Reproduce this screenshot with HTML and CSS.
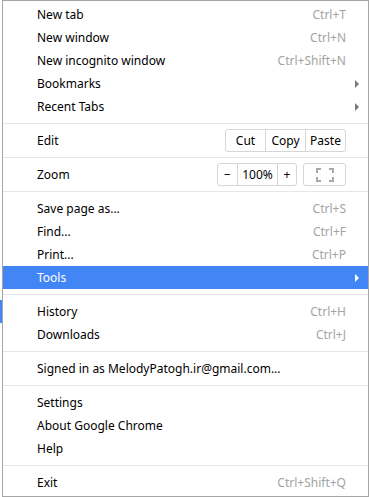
FILE: index.html
```html
<!DOCTYPE html>
<html lang="en">
<head>
    <meta charset="UTF-8">
    <meta name="viewport" content="width=device-width, initial-scale=1.0">
    <title>Chrome Menu</title>
    <link rel="stylesheet" href="styles.css">
</head>
<body>
    <div class="page">
        <div class="behind"></div>
        <div class="menu">
            <div class="item"><span class="label">New tab</span><span class="key">Ctrl+T</span></div>
            <div class="item"><span class="label">New window</span><span class="key">Ctrl+N</span></div>
            <div class="item"><span class="label">New incognito window</span><span class="key">Ctrl+Shift+N</span></div>
            <div class="item"><span class="label">Bookmarks</span><span class="arrow"></span></div>
            <div class="item"><span class="label">Recent Tabs</span><span class="arrow"></span></div>

            <div class="sep"></div>

            <div class="item">
                <span class="label">Edit</span>
                <div class="btn-group edit-group">
                    <span class="seg cut">Cut</span>
                    <span class="seg copy">Copy</span>
                    <span class="seg paste">Paste</span>
                </div>
            </div>

            <div class="sep"></div>

            <div class="item">
                <span class="label">Zoom</span>
                <div class="btn-group zoom-group">
                    <span class="seg minus">&minus;</span>
                    <span class="seg level">100%</span>
                    <span class="seg plus">+</span>
                </div>
                <div class="btn-group full">
                    <svg width="18" height="14" viewBox="0 0 18 14">
                        <!-- four corner marks -->
                        <path d="M1 5V1H5 M13 1H17V5 M17 9V13H13 M5 13H1V9" fill="none" stroke="#a8a8a8" stroke-width="2"/>
                    </svg>
                </div>
            </div>

            <div class="sep"></div>

            <div class="item"><span class="label">Save page as...</span><span class="key">Ctrl+S</span></div>
            <div class="item"><span class="label">Find...</span><span class="key">Ctrl+F</span></div>
            <div class="item"><span class="label">Print...</span><span class="key">Ctrl+P</span></div>
            <div class="item active"><span class="label">Tools</span><span class="arrow"></span></div>

            <div class="sep"></div>

            <div class="item"><span class="label">History</span><span class="key">Ctrl+H</span></div>
            <div class="item"><span class="label">Downloads</span><span class="key">Ctrl+J</span></div>

            <div class="sep"></div>

            <div class="item"><span class="label">Signed in as MelodyPatogh.ir@gmail.com...</span></div>

            <div class="sep"></div>

            <div class="item"><span class="label">Settings</span></div>
            <div class="item"><span class="label">About Google Chrome</span></div>
            <div class="item"><span class="label">Help</span></div>

            <div class="sep"></div>

            <div class="item"><span class="label">Exit</span><span class="key">Ctrl+Shift+Q</span></div>
        </div>
    </div>
</body>
</html>
```

FILE: styles.css
```css
body {
    margin: 0;
    padding: 0;
    background: #fff;
    font-family: "Noto Sans", "Open Sans", sans-serif;
    font-size: 12px;
    color: #000;
}
.page {
    position: relative;
    width: 369px;
    height: 497px;
    padding-left: 2px;
    box-sizing: border-box;
}
/* strip of the parent menu peeking out on the left */
.behind {
    position: absolute;
    left: 0;
    top: 300px;
    width: 2px;
    height: 23px;
    background: #4285f4;
}
.menu {
    height: 497px;
    border: 1px solid #a6a6a6;
    box-sizing: border-box;
    padding: 2px 0;
    background: #fff;
}
.item {
    display: flex;
    align-items: center;
    height: 23px;
    padding: 0 9px 0 34px;
}
.label {
    flex: 1;
    white-space: nowrap;
}
.key {
    color: #a3a3a3;
    margin-right: 13px;
}
.arrow {
    width: 0;
    height: 0;
    border-top: 4px solid transparent;
    border-bottom: 4px solid transparent;
    border-left: 4px solid #7a7a7a;
}
.item.active {
    background: #4285f4;
    color: #fff;
}
.item.active .arrow {
    border-left-color: #fff;
}
.sep {
    height: 1px;
    margin: 5px 0;
    background: #e6e6e6;
}
.btn-group {
    display: flex;
    height: 23px;
    border: 1px solid #d6d6d6;
    border-radius: 3px;
    box-sizing: border-box;
}
.seg {
    display: flex;
    align-items: center;
    justify-content: center;
    border-left: 1px solid #d6d6d6;
}
.seg:first-child {
    border-left: none;
}
.edit-group {
    margin-right: 13px;
}
.cut { width: 39px; }
.copy { width: 39px; }
.paste { width: 39px; }
.zoom-group {
    margin-right: 6px;
}
.minus { width: 19px; }
.level { width: 39px; }
.plus { width: 18px; }
.full {
    width: 43px;
    align-items: center;
    justify-content: center;
    margin-right: 13px;
}
```
